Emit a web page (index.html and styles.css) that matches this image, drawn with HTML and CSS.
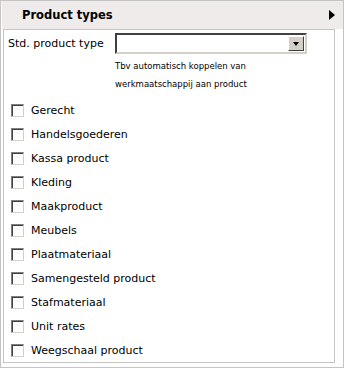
FILE: index.html
```html
<!DOCTYPE html>
<html lang="nl">
<head>
    <meta charset="UTF-8">
    <title>Product types</title>
    <link rel="stylesheet" href="styles.css">
</head>
<body>
    <div class="panel">
        <div class="panel-header">
            <span class="panel-title">Product types</span>
            <span class="panel-toggle"></span>
        </div>
        <div class="panel-body">
            <div class="field">
                <label class="field-label">Std. product type</label>
                <div class="select">
                    <span class="select-value"></span>
                    <span class="select-button"><span class="select-arrow"></span></span>
                </div>
            </div>
            <p class="field-help">Tbv automatisch koppelen van<br>werkmaatschappij aan product</p>

            <ul class="type-list">
                <li><input type="checkbox"><span>Gerecht</span></li>
                <li><input type="checkbox"><span>Handelsgoederen</span></li>
                <li><input type="checkbox"><span>Kassa product</span></li>
                <li><input type="checkbox"><span>Kleding</span></li>
                <li><input type="checkbox"><span>Maakproduct</span></li>
                <li><input type="checkbox"><span>Meubels</span></li>
                <li><input type="checkbox"><span>Plaatmateriaal</span></li>
                <li><input type="checkbox"><span>Samengesteld product</span></li>
                <li><input type="checkbox"><span>Stafmateriaal</span></li>
                <li><input type="checkbox"><span>Unit rates</span></li>
                <li><input type="checkbox"><span>Weegschaal product</span></li>
            </ul>
        </div>
    </div>
</body>
</html>
```

FILE: styles.css
```css
body {
    margin: 0;
    font-family: Tahoma, "DejaVu Sans", sans-serif;
    color: #000;
    background: #fff;
}

.panel {
    width: 344px;
    height: 368px;
    box-sizing: border-box;
    border: 1px solid #c4c4c4;
    background: #fff;
    padding: 0 8px 3px 1px;
}

.panel-header {
    height: 28px;
    margin-right: -8px;
    background: #efebea;
    display: flex;
    align-items: center;
    justify-content: space-between;
    padding: 0 8px 0 20px;
}

.panel-title {
    font-weight: bold;
    font-size: 11.5px;
}

.panel-toggle {
    width: 0;
    height: 0;
    border-top: 5px solid transparent;
    border-bottom: 5px solid transparent;
    border-left: 6px solid #000;
}

.panel-body {
    border: 1px solid #c4c4c4;
    height: 334px;
    box-sizing: border-box;
    margin-left: 1px;
    padding: 3px 0 0 4px;
}

.field {
    display: flex;
    align-items: center;
    font-size: 11px;
}

.field-label {
    width: 107px;
}

.select {
    width: 192px;
    height: 21px;
    box-sizing: border-box;
    border: 2px solid;
    border-color: #404040 #d4d0c8 #d4d0c8 #404040;
    background: #fff;
    display: flex;
    justify-content: flex-end;
    padding: 1px;
}

.select-button {
    width: 16px;
    background: #d4d0c8;
    border: 1px solid;
    border-color: #fff #404040 #404040 #fff;
    box-sizing: border-box;
    display: flex;
    align-items: center;
    justify-content: center;
}

.select-arrow {
    width: 0;
    height: 0;
    border-left: 3px solid transparent;
    border-right: 3px solid transparent;
    border-top: 4px solid #000;
}

.field-help {
    margin: 3px 0 0 107px;
    font-size: 8.5px;
    line-height: 18px;
}

.type-list {
    list-style: none;
    margin: 5px 0 0;
    padding: 0;
}

.type-list li {
    display: flex;
    align-items: center;
    height: 24px;
    font-size: 11px;
}

.type-list input {
    appearance: none;
    width: 13px;
    height: 13px;
    margin: 0 7px 0 3px;
    box-sizing: border-box;
    border: 1px solid;
    border-color: #808080 #d4d0c8 #d4d0c8 #808080;
    box-shadow: inset 1px 1px 0 #404040;
    background: #fff;
}
```
